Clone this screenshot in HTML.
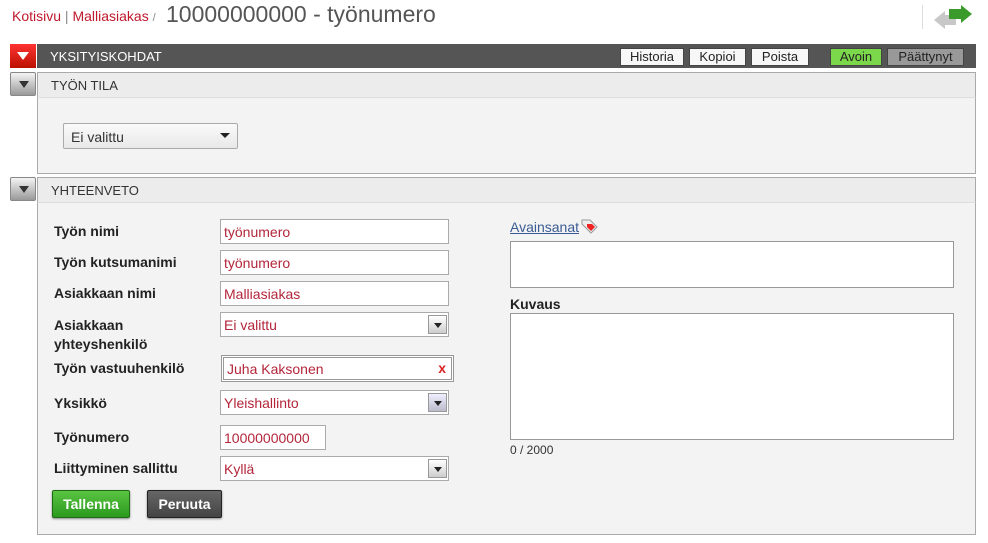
<!DOCTYPE html>
<html><head><meta charset="utf-8"><style>
*{box-sizing:border-box;margin:0;padding:0}
body{width:988px;height:543px;background:#fff;font-family:"Liberation Sans",Arial,sans-serif;position:relative;overflow:hidden}
.a{position:absolute}
.tg{position:absolute;left:10px;width:26px;height:24px;border:1px solid #888;background:linear-gradient(#f4f4f4,#999);border-radius:2px}
.tg:after{content:"";position:absolute;left:8px;top:8px;border-left:5px solid transparent;border-right:5px solid transparent;border-top:7px solid #333}
.hb{position:absolute;left:37px;width:939px;height:26px;background:#ececec;border:1px solid #aaa;border-bottom:1px solid #ddd;font-size:13px;color:#333;padding:5px 0 0 13px}
.pb{position:absolute;left:37px;width:939px;background:#f3f3f3;border:1px solid #aaa;border-top:none}
.btn{position:absolute;top:48px;height:18px;background:#f7f7f7;border:1px solid #444;font-size:13px;text-align:center;line-height:16px;color:#222}
.lb{position:absolute;left:54px;font-size:14px;font-weight:bold;color:#222}
.in{position:absolute;left:220px;width:229px;height:25px;background:#fff;border:1px solid #aaa;font-size:14px;color:#b3263a;padding:4px 0 0 3px}
.dd{position:absolute;right:1px;top:2px;width:19px;height:19px;border:1px solid #999;background:linear-gradient(#fff,#ccc)}
.dd:after{content:"";position:absolute;left:5px;top:7px;border-left:4px solid transparent;border-right:4px solid transparent;border-top:5px solid #222}
</style></head><body>
<div class="a" style="left:12px;top:8px;font-size:14px;color:#c0182b">Kotisivu <span style="color:#888">|</span> Malliasiakas <span style="color:#888;font-size:11px">/</span></div>
<div class="a" style="left:166px;top:1px;font-size:23px;color:#555">10000000000 - työnumero</div>
<div class="a" style="left:922px;top:5px;width:1px;height:24px;background:#ddd"></div>
<svg class="a" style="left:932px;top:3px" width="42" height="28" viewBox="0 0 42 28"><path d="M2 17 L13 8 V12 H24 V22 H13 V26 Z" fill="#c8c8c8"/><path d="M40 11 L29 2 V6 H17 V16 H29 V20 Z" fill="#3a9b2c"/></svg>
<div class="a" style="left:10px;top:44px;width:26px;height:24px;background:linear-gradient(#f33,#b10)"></div>
<div class="a" style="left:17px;top:52px;border-left:6px solid transparent;border-right:6px solid transparent;border-top:8px solid #fff"></div>
<div class="a" style="left:37px;top:44px;width:939px;height:24px;background:#555;color:#fff;font-size:13px;padding:5px 0 0 13px">YKSITYISKOHDAT</div>
<div class="btn" style="left:620px;width:64px">Historia</div>
<div class="btn" style="left:689px;width:57px">Kopioi</div>
<div class="btn" style="left:751px;width:58px">Poista</div>
<div class="btn" style="left:830px;width:52px;background:#7bd84a">Avoin</div>
<div class="btn" style="left:887px;width:77px;background:#999">Päättynyt</div>
<div class="tg" style="top:72px"></div>
<div class="hb" style="top:72px">TYÖN TILA</div>
<div class="pb" style="top:98px;height:76px"></div>
<div class="a" style="left:63px;top:123px;width:175px;height:26px;border:1px solid #aaa;border-radius:2px;background:linear-gradient(#fafafa,#e8e8e8);font-size:14px;color:#333;padding:5px 0 0 7px">Ei valittu</div>
<div class="a" style="left:220px;top:133px;border-left:5px solid transparent;border-right:5px solid transparent;border-top:5px solid #222"></div>
<div class="tg" style="top:177px"></div>
<div class="hb" style="top:177px">YHTEENVETO</div>
<div class="pb" style="top:203px;height:332px"></div>
<div class="lb" style="top:223px">Työn nimi</div>
<div class="lb" style="top:254px">Työn kutsumanimi</div>
<div class="lb" style="top:285px">Asiakkaan nimi</div>
<div class="lb" style="top:316px;line-height:19px">Asiakkaan<br>yhteyshenkilö</div>
<div class="lb" style="top:360px">Työn vastuuhenkilö</div>
<div class="lb" style="top:395px">Yksikkö</div>
<div class="lb" style="top:429px">Työnumero</div>
<div class="lb" style="top:460px">Liittyminen sallittu</div>
<div class="in" style="top:219px">työnumero</div>
<div class="in" style="top:250px">työnumero</div>
<div class="in" style="top:281px">Malliasiakas</div>
<div class="in" style="top:312px">Ei valittu<div class="dd"></div></div>
<div class="in" style="top:355px;left:221px;width:233px;height:27px;border:3px double #999;padding:3px 0 0 3px">Juha Kaksonen<span class="a" style="right:5px;top:2px;color:#d22;font-weight:bold">x</span></div>
<div class="in" style="top:390px">Yleishallinto<div class="dd" style="background:linear-gradient(#eef,#bbc)"></div></div>
<div class="in" style="top:425px;width:106px">10000000000</div>
<div class="in" style="top:456px">Kyllä<div class="dd"></div></div>
<div class="a" style="left:52px;top:490px;width:78px;height:28px;border:1px solid #1f6a14;border-radius:2px;background:linear-gradient(#5bc442,#2a9a1e);color:#fff;font-weight:bold;font-size:14px;text-align:center;line-height:26px;box-shadow:0 1px 2px #888">Tallenna</div>
<div class="a" style="left:147px;top:490px;width:75px;height:28px;border:1px solid #222;border-radius:2px;background:linear-gradient(#666,#444);color:#fff;font-weight:bold;font-size:14px;text-align:center;line-height:26px;box-shadow:0 1px 2px #888">Peruuta</div>
<div class="a" style="left:510px;top:219px;font-size:14px;color:#3a5b94;text-decoration:underline">Avainsanat</div>
<svg class="a" style="left:580px;top:218px" width="20" height="16" viewBox="0 0 20 16"><path d="M2 2 H10 L17 9 L11 15 L2 6 Z" fill="#eee" stroke="#999"/><path d="M7 6 H12 L15 9 L11 13 L7 9 Z" fill="#e22"/></svg>
<div class="a" style="left:510px;top:241px;width:444px;height:47px;background:#fff;border:1px solid #999"></div>
<div class="a" style="left:510px;top:296px;font-size:14px;font-weight:bold;color:#222">Kuvaus</div>
<div class="a" style="left:510px;top:313px;width:444px;height:127px;background:#fff;border:1px solid #999"></div>
<div class="a" style="left:510px;top:443px;font-size:12px;color:#333">0 / 2000</div>
</body></html>
